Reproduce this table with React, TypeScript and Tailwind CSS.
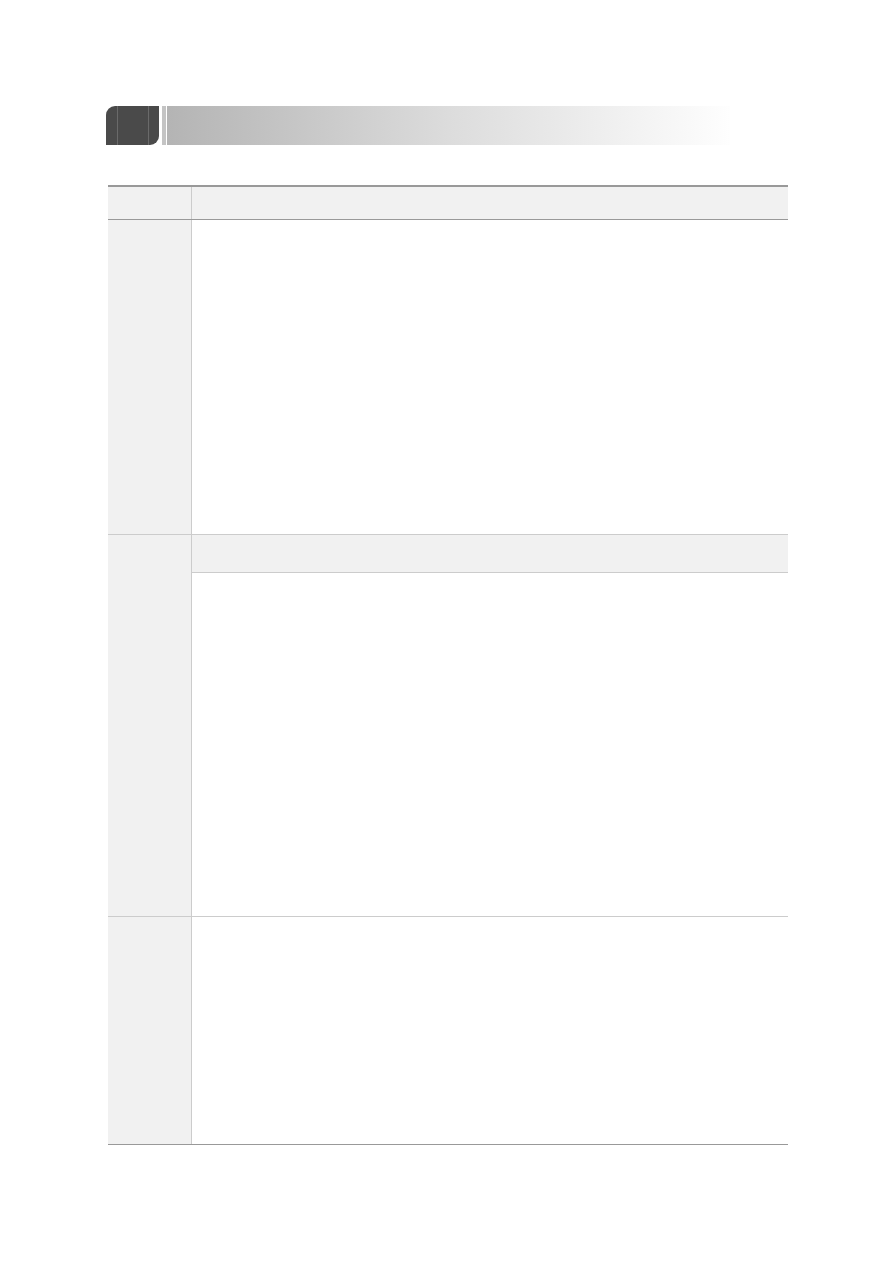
import React from 'react';

const Banner: React.FC = () => (
  <div className="flex h-[39px] w-[624px] items-stretch">
    <div className="flex w-[53px] rounded-tl-[9px] rounded-br-[9px] bg-[#4a4a4a]">
      <div className="ml-[11px] w-px bg-[#6a6a6a]" />
      <div className="ml-[30px] w-px bg-[#6a6a6a]" />
    </div>
    <div className="w-[3px] bg-white" />
    <div className="w-[4px] bg-[#c4c4c4]" />
    <div className="w-px bg-white" />
    <div className="flex-1 bg-gradient-to-r from-[#b4b4b4] via-[#dcdcdc] to-[#fefefe]" />
  </div>
);

export default function App() {
  return (
    <div className="min-h-[1262px] w-[893px] bg-white font-['Liberation_Sans',sans-serif]">
      <div className="pl-[106px] pt-[106px]">
        <Banner />
      </div>

      <div className="ml-[108px] mt-[40px] w-[680px] border-t-2 border-b border-t-[#999999] border-b-[#999999]">
        {/* header */}
        <div className="flex h-[33px] border-b border-[#999999] bg-[#f1f1f1]">
          <div className="w-[84px] border-r border-[#cccccc]" />
          <div className="flex-1" />
        </div>

        {/* row 1 */}
        <div className="flex h-[315px] border-b border-[#cccccc]">
          <div className="w-[84px] border-r border-[#cccccc] bg-[#f1f1f1]" />
          <div className="flex-1" />
        </div>

        {/* row 2 */}
        <div className="flex h-[382px] border-b border-[#cccccc]">
          <div className="w-[84px] border-r border-[#cccccc] bg-[#f1f1f1]" />
          <div className="flex flex-1 flex-col">
            <div className="h-[38px] border-b border-[#cccccc] bg-[#f1f1f1]" />
            <div className="flex-1" />
          </div>
        </div>

        {/* row 3 */}
        <div className="flex h-[227px]">
          <div className="w-[84px] border-r border-[#cccccc] bg-[#f1f1f1]" />
          <div className="flex-1" />
        </div>
      </div>
    </div>
  );
}
